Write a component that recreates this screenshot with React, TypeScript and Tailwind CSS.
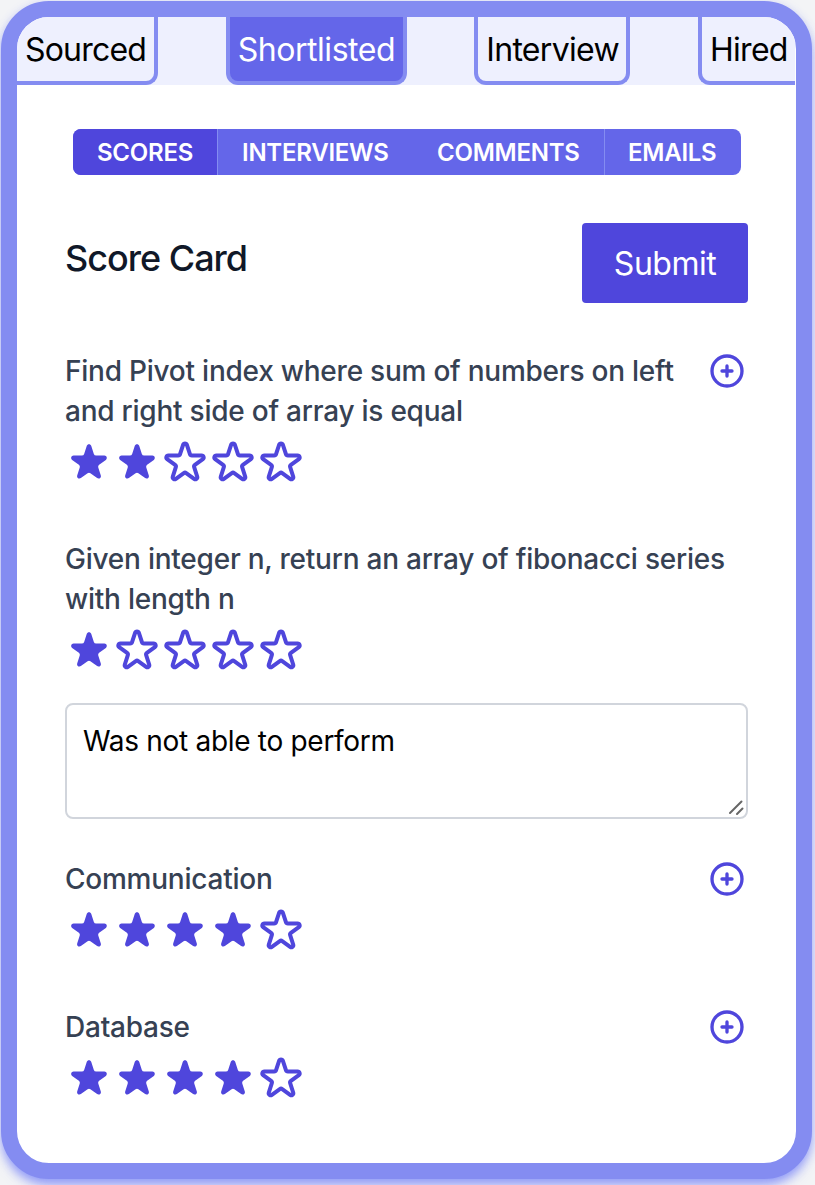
import React from "react";

const STAR_OUTLINE =
  "M11.049 2.927c.3-.921 1.603-.921 1.902 0l1.519 4.674a1 1 0 00.95.69h4.915c.969 0 1.371 1.24.588 1.81l-3.976 2.888a1 1 0 00-.363 1.118l1.518 4.674c.3.922-.755 1.688-1.538 1.118l-3.976-2.888a1 1 0 00-1.176 0l-3.976 2.888c-.783.57-1.838-.197-1.538-1.118l1.518-4.674a1 1 0 00-.363-1.118l-3.976-2.888c-.784-.57-.38-1.81.588-1.81h4.914a1 1 0 00.951-.69l1.519-4.674z";
const STAR_SOLID =
  "M9.049 2.927c.3-.921 1.603-.921 1.902 0l1.07 3.292a1 1 0 00.95.69h3.462c.969 0 1.371 1.24.588 1.81l-2.8 2.034a1 1 0 00-.364 1.118l1.07 3.292c.3.921-.755 1.688-1.54 1.118l-2.8-2.034a1 1 0 00-1.175 0l-2.8 2.034c-.784.57-1.838-.197-1.539-1.118l1.07-3.292a1 1 0 00-.364-1.118L2.98 8.72c-.783-.57-.38-1.81.588-1.81h3.461a1 1 0 00.951-.69l1.07-3.292z";

function Stars({ score }: { score: number }) {
  return (
    <div className="flex h-12 text-[#4f46dc]">
      {[1, 2, 3, 4, 5].map((n) =>
        n <= score ? (
          <svg key={n} className="size-12" viewBox="0 0 20 20" fill="currentColor">
            <path d={STAR_SOLID} />
          </svg>
        ) : (
          <svg
            key={n}
            className="size-12"
            viewBox="0 0 24 24"
            fill="none"
            stroke="currentColor"
            strokeWidth={2}
            strokeLinecap="round"
            strokeLinejoin="round"
          >
            <path d={STAR_OUTLINE} />
          </svg>
        ),
      )}
    </div>
  );
}

function AddNote() {
  return (
    <button className="mr-px h-10 w-10 shrink-0 text-[#4f46dc]" aria-label="Add note">
      <svg
        className="size-10"
        viewBox="0 0 24 24"
        fill="none"
        stroke="currentColor"
        strokeWidth={2}
        strokeLinecap="round"
        strokeLinejoin="round"
      >
        <path d="M12 9v3m0 0v3m0-3h3m-3 0H9m12 0a9 9 0 11-18 0 9 9 0 0118 0z" />
      </svg>
    </button>
  );
}

function Question({ lines, score, note }: { lines: string[]; score: number; note?: boolean }) {
  return (
    <div>
      <div className="flex justify-between">
        <p className="text-[28px] leading-10 font-medium tracking-[-0.235px] text-gray-700">
          {lines.map((line) => (
            <span key={line} className="block whitespace-nowrap">
              {line}
            </span>
          ))}
        </p>
        {note && <AddNote />}
      </div>
      <div className="mt-2">
        <Stars score={score} />
      </div>
    </div>
  );
}

export default function App() {
  return (
    <div className="h-[1185px] w-[815px] overflow-hidden bg-[#f3f4f6] pt-px pl-px font-['Inter',sans-serif]">
      <div className="h-[1178px] w-[811px] overflow-hidden rounded-[48px] border-16 border-[#848cf1] bg-white shadow-[0_8px_12px_-2px_rgba(129,140,248,0.8),0_2px_8px_0_rgba(129,140,248,0.35)]">
        <nav className="mr-px flex h-[68px] justify-between bg-[#eef0fe] text-[32px] leading-[48px] text-black">
          <div className="w-[141px] rounded-br-xl border-r-4 border-b-4 border-[#848cf1] pt-[9px] pl-2 tracking-[-0.8px]">
            Sourced
          </div>
          <div className="w-[181px] rounded-b-xl border-x-4 border-b-4 border-[#848cf1] bg-[#6466e9] pt-[9px] pl-2 tracking-[-0.45px] text-white">
            Shortlisted
          </div>
          <div className="w-[156px] rounded-b-xl border-x-4 border-b-4 border-[#848cf1] pt-[9px] pl-2 tracking-[-0.7px]">
            Interview
          </div>
          <div className="w-[97px] rounded-bl-xl border-b-4 border-l-4 border-[#848cf1] pt-[9px] pl-2 tracking-[-0.7px]">
            Hired
          </div>
        </nav>

        <div className="mt-11 ml-14 flex h-[46px] w-[668px] overflow-hidden rounded-lg bg-[#6466e9] text-2xl leading-[48px] font-semibold tracking-[-0.25px] text-white">
          <div className="w-36 bg-[#4f46dc] pl-6">SCORES</div>
          <div className="w-[196px] border-l border-[#848cf1] pl-6">INTERVIEWS</div>
          <div className="w-[191px] pl-6">COMMENTS</div>
          <div className="grow border-l border-[#848cf1] pl-[23px]">EMAILS</div>
        </div>

        <main className="mt-12 pr-12 pl-12">
          <div className="flex justify-between">
            <h1 className="mt-[7px] text-[36px] leading-[56px] font-medium tracking-[-1px] text-gray-900">
              Score Card
            </h1>
            <button className="h-20 w-[166px] rounded bg-[#4f46dc] pt-0.5 text-[32px] tracking-[-0.5px] text-white">
              Submit
            </button>
          </div>

          <div className="mt-12">
            <Question
              lines={["Find Pivot index where sum of numbers on left", "and right side of array is equal"]}
              score={2}
              note
            />
          </div>
          <div className="mt-[52px]">
            <Question
              lines={["Given integer n, return an array of fibonacci series", "with length n"]}
              score={1}
            />
            <div className="relative mt-7 h-[116px] rounded-lg border-2 border-gray-300 px-4 py-4 text-[28px] leading-10 tracking-[-0.3px] text-black">
              Was not able to perform
              <svg
                className="absolute right-[2px] bottom-[1px] size-4"
                viewBox="0 0 16 16"
                stroke="#666"
                strokeWidth={2}
                strokeLinecap="round"
              >
                <path d="M2 13 13.5 1.5M9 14 14.5 8.5" />
              </svg>
            </div>
          </div>
          <div className="mt-10">
            <Question lines={["Communication"]} score={4} note />
          </div>
          <div className="mt-[52px]">
            <Question lines={["Database"]} score={4} note />
          </div>
        </main>
      </div>
    </div>
  );
}
